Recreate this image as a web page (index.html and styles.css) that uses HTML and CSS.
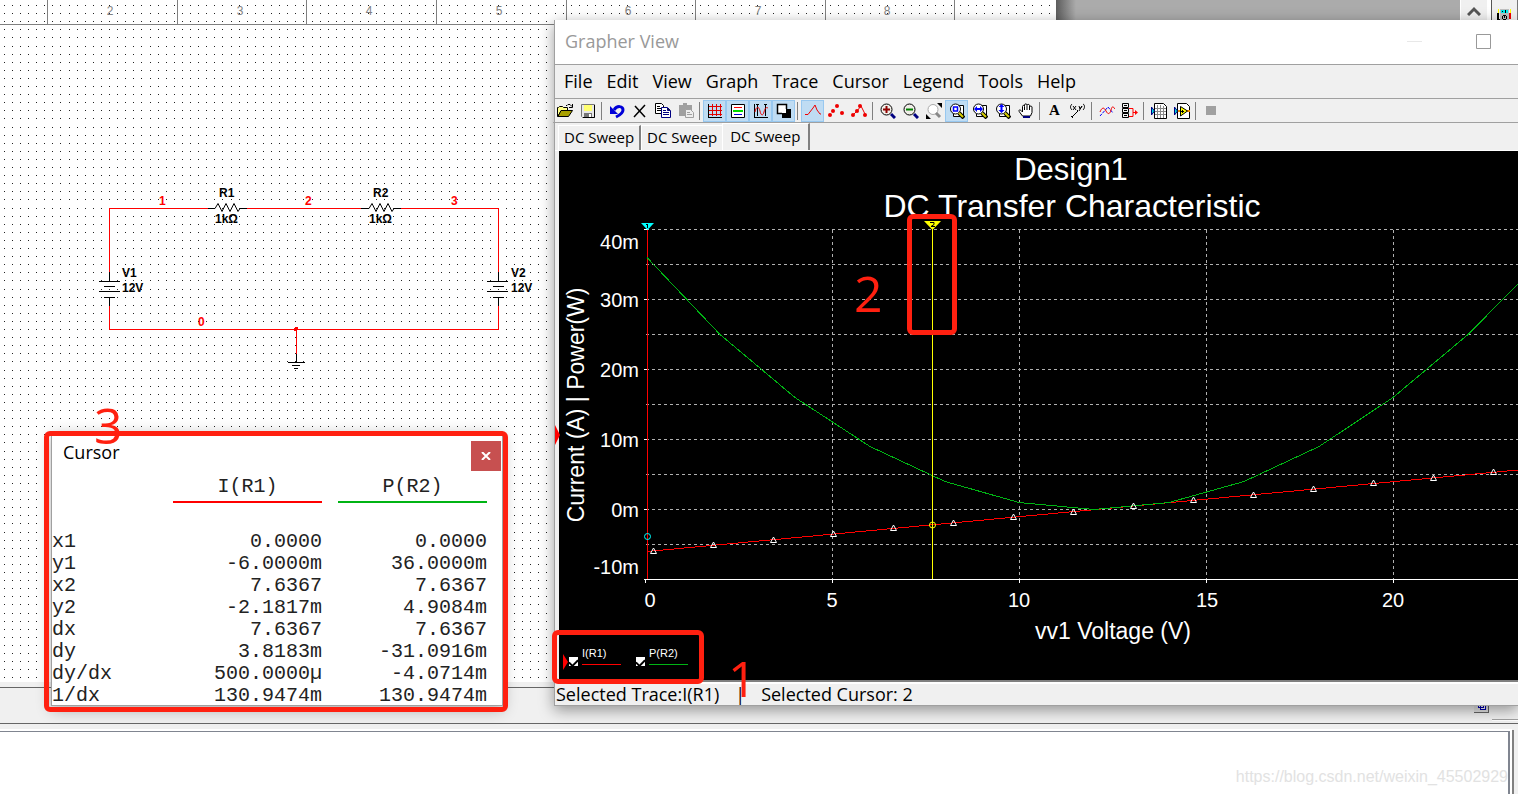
FILE: index.html
```html
<!DOCTYPE html>
<html lang="en">
<head>
<meta charset="utf-8">
<title>Grapher View</title>
<link rel="stylesheet" href="styles.css">
</head>
<body>
<div class="desktop">
  <main class="workspace">
    <svg class="sheet" width="1056" height="682" shape-rendering="crispEdges">
      <defs>
        <pattern id="dots" x="4" y="5" width="81" height="81" patternUnits="userSpaceOnUse">
          <path stroke="#222" stroke-dasharray="1 7 1 7 1 7 1 7 1 7 1 7 1 7 1 8 1 7 1 7" d="M0 .5h81M0 8.5h81M0 16.5h81M0 24.5h81M0 32.5h81M0 41.5h81M0 49.5h81M0 57.5h81M0 65.5h81M0 73.5h81"/>
        </pattern>
      </defs>
      <rect width="1056" height="682" fill="#fff"/>
      <rect width="1056" height="682" fill="url(#dots)"/>
      <path stroke="#808080" d="M0 24.5h1056M47.5 0v24M177.5 0v24M306.5 0v24M436.5 0v24M566.5 0v24M695.5 0v24M825.5 0v24M954.5 0v24"/>
      <g class="ruler">
        <text x="110" y="15">2</text><text x="240" y="15">3</text><text x="369" y="15">4</text><text x="499" y="15">5</text><text x="628" y="15">6</text><text x="758" y="15">7</text><text x="887" y="15">8</text>
      </g>
      <path fill="none" stroke="#f00" d="M109.5 272V208.5H208M247 208.5H361M401 208.5H498.5V272M109.5 305V329.5H498.5V305M296.5 329V354"/>
      <circle cx="296" cy="329" r="2" fill="#f00"/>
      <g fill="none" stroke="#000">
        <path d="M109.5 272v9M99 281.5h21M104 286.5h11M99 291.5h21M104 297.5h11M109.5 297v9"/>
        <path d="M498.5 272v9M487 281.5h21M493 286.5h11M487 291.5h21M493 297.5h11M498.5 297v9"/>
        <path d="M296.5 354v8M288 362.5h17M292 365.5h8M294 368.5h4"/>
        <g shape-rendering="auto">
          <path d="M208 208.5h7l3-5 4 8 4-8 4 8 4-8 4 8 2-3h7"/>
          <path d="M361 208.5h8l3-5 4 8 4-8 4 8 4-8 4 8 2-3h7"/>
        </g>
      </g>
      <g class="part">
        <text x="219" y="197">R1</text><text x="215" y="223">1kΩ</text>
        <text x="373" y="197">R2</text><text x="369" y="223">1kΩ</text>
        <text x="122" y="277">V1</text><text x="122" y="292">12V</text>
        <text x="511" y="277">V2</text><text x="511" y="292">12V</text>
      </g>
      <g class="net">
        <text x="159" y="205">1</text><text x="305" y="205">2</text><text x="451" y="205">3</text><text x="198" y="326">0</text>
      </g>
    </svg>
    <div class="void"></div>
    <div class="scroll">
      <button class="scroll-up" aria-label="Scroll up"><svg width="14" height="10"><path d="M1 9 7 3l6 6" fill="none" stroke="#555" stroke-width="3"/></svg></button>
    </div>
    <div class="instruments">
      <svg width="14" height="16" shape-rendering="crispEdges"><path fill="#ff0" d="M1 0h1v4H1zM13 0h1v4h-1z"/><path d="M0 4h2v8H0zM2 10h2v2H2z"/><path fill="#e00" d="M12 4h2v6h-2z"/><path fill="#c0c0c0" d="M3 0h9v12H3z"/><path fill="#0ee" d="M4 1h7v3H4z"/><path d="M5 2h1v1H5zM8 1h1v3H8zM6 6h3v1H6zM5 7h1v3H5zM9 7h1v3H9zM6 10h3v1H6zM8 7h-1v2h1z"/></svg>
    </div>
  </main>
  <div class="strip">
    <svg width="44" height="36" shape-rendering="crispEdges"><path fill="#e4e4e4" d="M0 0h15v24H0z"/><path fill="none" stroke="#666" d="M0 24.500h14.500V0"/><path fill="#fff" stroke="#0000b0" stroke-width="1" d="M4.500 14.500h5v5h-5zM6.500 17.500h5v4h-5z"/><path stroke="#a0a0a0" d="M18 31.500h26"/><path stroke="#fff" d="M18 32.500h26"/></svg>
  </div>
  <footer class="sheetview">
    <div class="results"><span class="watermark">https://blog.csdn.net/weixin_45502929</span></div>
  </footer>

  <section class="grapher">
    <header class="titlebar">
      <h1>Grapher View</h1>
      <div class="winbtns">
        <button aria-label="Minimize"><svg width="15" height="15"><path d="M0 7.500h15" stroke="#e8e8e8"/></svg></button>
        <button aria-label="Maximize"><svg width="15" height="15"><path d="M.5.5h14v14H.5z" fill="none" stroke="#999"/></svg></button>
      </div>
    </header>
    <nav class="menu">
      <button>File</button><button>Edit</button><button>View</button><button>Graph</button><button>Trace</button><button>Cursor</button><button>Legend</button><button>Tools</button><button>Help</button>
    </nav>
    <div class="toolbar">
      <button aria-label="Open"><svg viewBox="0 0 16 16"><path fill="#ff8" stroke="#000" d="M.5 13.500v-9h1l1-1h3l1 1h4v3h-6z"/><path fill="#a8a000" stroke="#000" d="m1 13.500 3-6h11.500l-4 6z"/><path fill="none" stroke="#000" d="M9 2.500h1l1-1h2l2 2M15.500 1v3.500H12"/></svg></button>
      <button aria-label="Save"><svg viewBox="0 0 16 16"><path fill="#e8e8e8" stroke="#777" d="M1.500 1.500h13v13h-12l-1-1z"/><path fill="#ffff70" d="M4 2h8v6H4z"/><path fill="#777" d="M4 10h8v5H4z"/><path fill="#fff" d="M9 11h2v4H9z"/><path fill="none" stroke="#000" d="M14.500 2v12.500H3"/></svg></button>
      <i class="sep"></i>
      <button aria-label="Undo"><svg viewBox="0 0 16 16"><path fill="none" stroke="#0000d8" stroke-width="3" d="M5 7c3-5 9-4 9 0 0 3-3 5-7 7"/><path fill="#0000d8" d="M1 3v8h8z"/></svg></button>
      <button aria-label="Delete"><svg viewBox="0 0 16 16"><path fill="none" stroke="#000" stroke-width="1.500" d="m3 3 10 11M13 2 2 14"/></svg></button>
      <button aria-label="Copy"><svg viewBox="0 0 16 16"><path fill="#fff" stroke="#000" d="M.5.5h6l2 2v8h-8z"/><path stroke="#000" d="M2 3.500h3M2 5.500h4M2 7.500h4"/><path fill="#fff" stroke="#000080" d="M6.500 4.500h6l3 3v7h-9z"/><path stroke="#000080" d="M8 7.500h3M8 9.500h6M8 11.500h6M12.500 5v2.500H15"/></svg></button>
      <button aria-label="Paste"><svg viewBox="0 0 16 16"><path fill="#a0a0a0" d="M1 2h4V0h4v2h5v11H1z"/><path fill="#eee" stroke="#a0a0a0" d="M7.500 6.500h5l3 3v5h-8z"/><path stroke="#a0a0a0" d="M9 9.500h3M9 11.500h5"/></svg></button>
      <i class="sep"></i>
      <button class="on" aria-label="Grid"><svg viewBox="0 0 16 16"><path stroke="#000" d="M1.500 1v14M1 14.500h14"/><path stroke="#e00000" d="M5.500 1v12M9.500 1v12M13.500 1v12M2 3.500h13M2 7.500h13M2 11.500h13"/></svg></button>
      <button class="on" aria-label="Legend"><svg viewBox="0 0 16 16"><path fill="#fff" stroke="#000" d="M1.500 1.500h13v13h-13z"/><path stroke="#f00" d="M4 4.500h8"/><path stroke="#0d0" stroke-width="2" d="M3 8h10"/><path stroke="#0000d8" d="M4 11.500h8"/></svg></button>
      <button class="on" aria-label="Cursors"><svg viewBox="0 0 16 16"><path stroke="#000" d="M1.500 1v14M1 14.500h14M4.500 1v12M12.500 1v12M3 1.500h3M11 1.500h3"/><path fill="none" stroke="#e00" d="M2 9c1-6 4-6 5-1s3 5 4 1 2-5 4-4"/></svg></button>
      <button class="on" aria-label="Overlay"><svg viewBox="0 0 16 16"><path fill="#fff" stroke="#000" stroke-width="1.500" d="M1.500 1.500h9v9h-9z"/><path d="M6 6h9v9H6z"/><path fill="#fff" d="M6 6h4v4H6z"/></svg></button>
      <i class="sep"></i>
      <button class="on" aria-label="Line"><svg viewBox="0 0 16 16"><path fill="none" stroke="#e00" d="M0 11.500h3L8 5l2-3 2 5 3 4h1"/></svg></button>
      <button aria-label="Points"><svg viewBox="0 0 16 16"><g fill="#e00"><circle cx="2" cy="12" r="2"/><circle cx="5" cy="8" r="2"/><circle cx="9" cy="3" r="2"/><circle cx="14" cy="10" r="2"/></g></svg></button>
      <button aria-label="Line and points"><svg viewBox="0 0 16 16"><path fill="none" stroke="#e00" d="m2 12 4-4 4-5 4 8"/><g fill="#e00"><circle cx="2" cy="12" r="2"/><circle cx="6" cy="8" r="2"/><circle cx="9" cy="3" r="2"/><circle cx="14" cy="12" r="2"/></g></svg></button>
      <i class="sep"></i>
      <button aria-label="Zoom in"><svg viewBox="0 0 16 16"><circle cx="6.500" cy="6.500" r="5.500" fill="#f0eee8" stroke="#000"/><path stroke="#900000" stroke-width="2" d="M3 6.500h7M6.500 3v7"/><path stroke="#000080" stroke-width="3" d="m11 11 4 4"/></svg></button>
      <button aria-label="Zoom out"><svg viewBox="0 0 16 16"><circle cx="6.500" cy="6.500" r="5.500" fill="#f0eee8" stroke="#000"/><path stroke="#008000" stroke-width="2" d="M3 6.500h7"/><path stroke="#000080" stroke-width="3" d="m11 11 4 4"/></svg></button>
      <button aria-label="Zoom full"><svg viewBox="0 0 16 16"><circle cx="7" cy="6.500" r="5" fill="#fff" stroke="#aaa"/><path stroke="#888" stroke-width="3" d="m10 10 4 4"/><path d="M11 0h5v5zM0 11v5h5z"/></svg></button>
      <button class="on" aria-label="Zoom area"><svg viewBox="0 0 16 16"><path fill="#fff" stroke="#000" d="M8.500 2.500h6v11h-10v-3"/><circle cx="6.500" cy="6" r="5" fill="#fff" stroke="#000"/><path fill="none" stroke="#00f" stroke-width="1.500" d="M4.500 4h4v4h-4z"/><path stroke="#000" stroke-width="4" d="m10 10 5 5"/><path stroke="#d8d000" stroke-width="2" d="m10 10 4 4"/></svg></button>
      <button aria-label="Zoom horizontal"><svg viewBox="0 0 16 16"><path fill="#fff" stroke="#000" d="M8.500 2.500h6v11h-10v-3"/><circle cx="6.500" cy="6" r="5" fill="#fff" stroke="#000"/><path fill="#00f" d="m2 6 3-3v2h3V3l3 3-3 3V7H5v2z"/><path stroke="#000" stroke-width="4" d="m10 10 5 5"/><path stroke="#d8d000" stroke-width="2" d="m10 10 4 4"/></svg></button>
      <button aria-label="Zoom vertical"><svg viewBox="0 0 16 16"><path fill="#fff" stroke="#000" d="M8.500 2.500h6v11h-10v-3"/><circle cx="6.500" cy="6" r="5" fill="#fff" stroke="#000"/><path fill="#00f" d="m6.500 1 3 3h-2v3h2l-3 3-3-3h2V4h-2z"/><path stroke="#000" stroke-width="4" d="m10 10 5 5"/><path stroke="#d8d000" stroke-width="2" d="m10 10 4 4"/></svg></button>
      <button aria-label="Pan"><svg viewBox="0 0 16 16"><path fill="#fff" stroke="#000" d="M4.500 13 1.500 9c-1.500-2 .5-3 2-1l1 1V3.500c0-1.500 2-1.500 2 0V2c0-1.500 2.500-1.500 2.500 0v.5c0-1.500 2.500-1.500 2.500 0V4c0-1.500 2.500-1 2.500 0v5.500L12.500 13z"/><path stroke="#000" d="M6.500 4v3M9 3v4M11.500 4v3"/><path fill="#000080" d="M5 13h7v2H5z"/></svg></button>
      <i class="sep"></i>
      <button class="glyph" aria-label="Add text">A</button>
      <button aria-label="Data label"><svg viewBox="0 0 16 16"><path fill="none" stroke="#000" d="M2 1C0 3 0 5 2 7M3 3l3 4M6 3 3 7M8 7l-1 1M9 3l1 3 2-3-3 5M13 1c2 1 2 4 0 6M2 14l6-6M1 13l2 2"/></svg></button>
      <i class="sep"></i>
      <button aria-label="Add traces"><svg viewBox="0 0 16 16"><path fill="none" stroke="#00f" stroke-dasharray="3 1" d="m1 13 8-9 5 6"/><path fill="none" stroke="#e00" d="M1 9c2-5 4-5 6-1s4 3 5-1 2-4 4-1"/></svg></button>
      <button aria-label="Instruments"><svg viewBox="0 0 16 16"><path fill="none" stroke="#000" d="M.5.5h6v4h-6zM.5 5.500h6v4h-6zM.5 10.500h6v4h-6zM2 2.500h3M2 7.500h3M2 12.500h3"/><path fill="none" stroke="#f00" d="M7 5.500h4v8H7M11 9.500h3"/><path fill="#f00" d="M13 7v5l3-2.500z"/></svg></button>
      <i class="sep"></i>
      <button aria-label="Export to worksheet"><svg viewBox="0 0 16 16"><path fill="#fff" stroke="#000" d="M3.500.500h9l3 3v12h-12z"/><path stroke="#888" d="M6.500 2v13M9.500 2v13M12.500 3v12M4 5.500h11M4 8.500h11M4 11.500h11"/><path fill="#0dd" stroke="#000080" d="M.5 4v8l3-4z"/></svg></button>
      <button aria-label="Export to LabVIEW"><svg viewBox="0 0 16 16"><path fill="#fff" stroke="#000" d="M3.500.500h9l3 3v12h-12z"/><path stroke="#e80" stroke-width="2" d="M4 8h12"/><path fill="#ff0" stroke="#000" d="m6.500 3.500 7 4.500-7 5z"/><path stroke="#000" d="M7 8.500h3M8.500 7v3"/><path fill="#0dd" stroke="#000080" d="M.5 4v8l3-4z"/></svg></button>
      <i class="sep"></i>
      <button aria-label="Stop" disabled><svg viewBox="0 0 16 16"><path fill="#a0a0a0" d="M3 3h10v9H3z"/></svg></button>
    </div>
    <div class="tabs">
      <button>DC Sweep</button><button>DC Sweep</button><button class="active">DC Sweep</button>
    </div>
    <div class="plot">
      <svg class="chart" viewBox="559 151 959 496">
        <g fill="none" shape-rendering="crispEdges">
          <path stroke="#b0b0b0" stroke-dasharray="3 3" d="M646 229.500H1518M646 264.500H1518M646 299.500H1518M646 334.500H1518M646 369.500H1518M646 404.500H1518M646 439.500H1518M646 474.500H1518M646 509.500H1518M646 544.500H1518M832.500 230V579M1019.500 230V579M1206.500 230V579M1393.500 230V579"/>
          <path stroke="#fff" d="M644 229.500h4M644 299.500h4M644 369.500h4M644 439.500h4M644 509.500h4M644 579.500H1518M645.500 579v4M832.500 579v4M1019.500 579v4M1206.500 579v4M1393.500 579v4"/>
          <path stroke="#f00" d="M647.500 230V579M647 551.500 1518 470"/>
          <path stroke="#00b414" d="M647 257.500 720 334.500 795 397.500 870 446.500 945 481.500 1019 502.500 1094 509.500 1169 502.500 1244 481.500 1319 446.500 1393 397.500 1468 334.500 1518 284"/>
          <path stroke="#ff0" d="M932.500 229V579"/>
        </g>
        <g fill="none" stroke="#fff">
          <path d="m653.500 548-3 5.500h6zM713.500 542l-3 5.500h6zM773.500 537l-3 5.500h6zM833.500 531l-3 5.500h6zM893.500 525l-3 5.500h6zM953.500 520l-3 5.500h6zM1013.500 514l-3 5.500h6zM1073.500 509l-3 5.500h6zM1133.500 503l-3 5.500h6zM1193.500 497l-3 5.500h6zM1253.500 492l-3 5.500h6zM1313.500 486l-3 5.500h6zM1373.500 480l-3 5.500h6zM1433.500 475l-3 5.500h6zM1493.500 469l-3 5.500h6z"/>
          <circle cx="647.500" cy="536.500" r="3" stroke="#0ff"/>
          <circle cx="932.500" cy="525" r="3" stroke="#ff0"/>
        </g>
        <path fill="#0ff" d="M641 223h13l-6.500 7z"/><path stroke="#000" d="M647.500 224v4M646 224.500h2"/>
        <path fill="#ff0" d="M924 221h17l-8.500 9z"/><path fill="none" stroke="#000" d="M930 222.500h4v2l-3 2h4"/>
        <g class="title"><text x="1071" y="180">Design1</text><text class="subtitle" x="1072" y="217">DC Transfer Characteristic</text></g>
        <g class="ylab"><text x="639" y="249">40m</text><text x="639" y="307">30m</text><text x="639" y="377">20m</text><text x="639" y="447">10m</text><text x="639" y="517">0m</text><text x="639" y="574">-10m</text></g>
        <g class="xlab"><text x="650" y="607">0</text><text x="832" y="607">5</text><text x="1019" y="607">10</text><text x="1207" y="607">15</text><text x="1393" y="607">20</text></g>
        <g class="axis"><text x="1113" y="639">vv1 Voltage (V)</text><text transform="translate(584 405) rotate(-90)">Current (A) | Power(W)</text></g>
      </svg>
      <div class="legend">
        <svg width="5" height="16"><path fill="#f00" d="M0 0l5 8-5 8z"/></svg>
        <label><input type="checkbox" checked><span class="red">I(R1)</span></label>
        <label><input type="checkbox" checked><span class="green">P(R2)</span></label>
      </div>
    </div>
    <div class="status"><span>Selected Trace:I(R1)</span><span>|</span><span>Selected Cursor: 2</span></div>
    <svg class="pointer" width="5" height="20"><path fill="#f00" d="M0 0l5 10-5 10z"/></svg>
  </section>

  <section class="cursor">
    <header><h2>Cursor</h2><button aria-label="Close"><svg width="10" height="8"><path d="m1 0 8 8M9 0 1 8" stroke="#fff" stroke-width="2"/></svg></button></header>
    <table>
      <thead><tr><th></th><th><span class="red">I(R1)</span></th><th><span class="green">P(R2)</span></th></tr></thead>
      <tbody>
        <tr><td>x1</td><td>0.0000</td><td>0.0000</td></tr>
        <tr><td>y1</td><td>-6.0000m</td><td>36.0000m</td></tr>
        <tr><td>x2</td><td>7.6367</td><td>7.6367</td></tr>
        <tr><td>y2</td><td>-2.1817m</td><td>4.9084m</td></tr>
        <tr><td>dx</td><td>7.6367</td><td>7.6367</td></tr>
        <tr><td>dy</td><td>3.8183m</td><td>-31.0916m</td></tr>
        <tr><td>dy/dx</td><td>500.0000µ</td><td>-4.0714m</td></tr>
        <tr><td>1/dx</td><td>130.9474m</td><td>130.9474m</td></tr>
      </tbody>
    </table>
  </section>

  <div class="mark mark-legend"></div>
  <div class="mark mark-cursor"></div>
  <div class="mark mark-table"></div>
  <span class="num num-1">1</span>
  <span class="num num-2">2</span>
  <span class="num num-3">3</span>
</div>
</body>
</html>
```
FILE: styles.css
```css
* { box-sizing: border-box; }
body { margin: 0; font-family: "Open Sans", "Noto Sans", sans-serif; color: #000; }
button { border: 0; padding: 0; background: none; font: inherit; color: inherit; }
svg { display: block; }
h1, h2 { margin: 0; font-weight: 400; }

.desktop { position: relative; height: 100vh; overflow: hidden; display: flex; flex-direction: column; background: #f0f0f0; }

/* Schematic editor */
.workspace { flex: 1; min-height: 0; display: flex; border-bottom: 1px solid #666; overflow: hidden; }
.sheet { flex: none; }
.void { flex: 1; background: linear-gradient(90deg, #5c5c5c, #ababab 20px); }
.scroll { width: 31px; border-left: 1px solid #fff; border-right: 4px solid #fff; background: #f0f0f0; }
.scroll-up { width: 26px; height: 22px; display: grid; place-items: center; }
.instruments { width: 27px; border-left: 1px solid #555; border-right: 1px solid #777; padding: 9px 5px; }
.ruler { font: 12px "Liberation Sans", sans-serif; fill: #808080; text-anchor: middle; }
.part { font: bold 12px "Liberation Sans", sans-serif; }
.net { font: bold 12px "Liberation Sans", sans-serif; fill: #f00; }
.strip { height: 36px; border-bottom: 1px solid #666; display: flex; justify-content: flex-end; }
.sheetview { height: 70px; padding: 7px 5px 0 0; }
.results { height: 100%; background: #fff; border-top: 1px solid #808590; border-right: 2px solid #808590; outline: 2px solid #fff; box-shadow: 3px 0 0 1px #808080; display: flex; align-items: center; justify-content: flex-end; padding-top: 28px; margin-right: 3px; }
.watermark { font: 16px "Liberation Sans", sans-serif; color: #e2e2e2; }

/* Grapher window */
.grapher { position: absolute; left: 554px; right: 0; top: 20px; height: 686px; display: flex; flex-direction: column; background: #f0f0f0; border: 1px solid #a0a0a0; border-width: 0 0 1px 1px; box-shadow: 0 4px 14px rgba(0, 0, 0, .4); }
.titlebar { height: 45px; background: #fff; border-bottom: 1px solid #a0a0a0; display: flex; align-items: center; justify-content: space-between; padding: 0 27px 2px 10px; }
.titlebar h1 { font-size: 18px; color: #999; }
.winbtns { display: flex; gap: 54px; }
.menu { height: 34px; display: flex; align-items: center; gap: 14px; padding: 0 0 2px 9px; border-bottom: 1px solid #a0a0a0; font-size: 18px; line-height: 24px; }
.toolbar { height: 24px; margin-left: -2px; display: flex; align-items: center; border-bottom: 1px solid #a0a0a0; }
.toolbar button { width: 23px; height: 22px; display: grid; place-items: center; }
.toolbar button svg { width: 16px; height: 16px; }
.toolbar .on { background: #bfdcf3; border: 1px solid #98c8f0; }
.sep { width: 4px; height: 18px; margin-left: 2px; border-left: 1px solid #808080; }
.toolbar .glyph { font: bold 15px "Liberation Serif", serif; }
.tabs { height: 28px; display: flex; align-items: flex-end; padding-left: 3px; font-size: 15px; line-height: 20px; border-bottom: 1px solid #fff; }
.tabs button { height: 25px; padding: 0 5px 2px; border: 1px solid #fff; border-width: 1px 0 0 1px; }
.tabs button:first-child { border-right: 2px solid #808080; }
.tabs .active { height: 27px; padding: 0 8px 3px 7px; border-right: 2px solid #808080; }
.plot { flex: 1; min-height: 0; margin-left: 4px; background: #000; color: #fff; display: flex; flex-direction: column; justify-content: space-between; }
.chart { width: 100%; min-height: 0; }
.chart text { font-family: "Liberation Sans", sans-serif; fill: #fff; }
.title { font-size: 31px; text-anchor: middle; }
.subtitle { font-size: 32px; }
.ylab { font-size: 20px; text-anchor: end; }
.xlab { font-size: 20px; text-anchor: middle; }
.axis { font-size: 23px; text-anchor: middle; }
.legend { height: 33px; flex: none; display: flex; align-items: center; padding: 0 0 4px 4px; gap: 1px; }
.legend label { display: flex; align-items: center; gap: 4px; margin-right: 14px; font: 11px "Liberation Sans", sans-serif; }
.legend input { appearance: none; width: 9px; height: 9px; margin: 0; background: #fff; display: grid; place-items: center; }
.legend input:checked::before { content: ""; width: 7px; height: 4px; border: 2px solid #000; border-width: 0 0 2px 2px; transform: rotate(-45deg); }
.legend span { width: 39px; height: 18px; margin-bottom: 8px; border-bottom: 1px solid; }
.legend label span { margin-bottom: 12px; }
.legend .red, .cursor .red { border-color: #f00; }
.legend .green, .cursor .green { border-color: #00b414; }
.status { height: 25px; border-top: 2px solid #808080; box-shadow: inset 0 2px #fff; font-size: 18px; line-height: 25px; padding-left: 1px; display: flex; gap: 16px; }
.pointer { position: absolute; left: 0; top: 405px; }

/* Cursor readout window */
.cursor { position: absolute; left: 51px; top: 431px; width: 452px; height: 275px; background: #fff; border: 1px solid #a0a0a0; box-shadow: 0 4px 14px rgba(0, 0, 0, .3); }
.cursor header { display: flex; justify-content: space-between; padding: 9px 1px 0 11px; height: 41px; }
.cursor h2 { font-size: 18px; line-height: 22px; }
.cursor header button { width: 30px; height: 30px; background: #c75050; display: grid; place-items: center; }
.cursor table { border-collapse: collapse; table-layout: fixed; width: 435px; font: 20px/22px "Liberation Mono", monospace; color: #222; }
.cursor th, .cursor td { padding: 0; }
.cursor th { height: 58px; vertical-align: top; font-weight: 400; width: 165px; padding-left: 16px; }
.cursor th:first-child { width: 105px; }
.cursor th span { display: block; height: 30px; padding-top: 3px; border-bottom: 2px solid; }
.cursor td { text-align: right; height: 22px; }
.cursor td:first-child { text-align: left; }

/* Reader annotations */
.mark { position: absolute; border: 5px solid #ff2010; border-radius: 6px; }
.mark-legend { left: 552px; top: 630px; width: 152px; height: 54px; }
.mark-cursor { left: 907px; top: 214px; width: 50px; height: 121px; }
.mark-table { left: 44px; top: 431px; width: 464px; height: 281px; }
.num { position: absolute; font-size: 50px; line-height: 50px; color: #ff2010; }
.num-1 { left: 728px; top: 653px; }
.num-2 { left: 854px; top: 268px; }
.num-3 { left: 94px; top: 400px; }
```
